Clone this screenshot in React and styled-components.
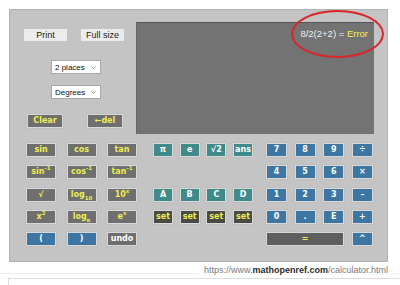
import React from 'react';
import styled, { createGlobalStyle } from 'styled-components';

const GlobalStyle = createGlobalStyle`
  body {
    margin: 0;
    background: #ffffff;
    font-family: "Liberation Sans", Arial, sans-serif;
  }
`;

const Page = styled.div`
  width: 400px;
  height: 285px;
  overflow: hidden;
`;

const Panel = styled.div`
  position: relative;
  box-sizing: border-box;
  margin: 9px 0 0 9px;
  width: 379px;
  height: 253px;
  background: #c4c4c4;
  border: 1px solid #b2b2b2;
  padding-top: 12px;
`;

const Top = styled.div`
  display: flex;
`;

const Controls = styled.div`
  width: 126px;
  display: flex;
  flex-direction: column;
  align-items: flex-start;
`;

const ToolRow = styled.div`
  display: flex;
  gap: ${p => p.$gap}px;
  margin-top: ${p => p.$top}px;
  padding-left: ${p => p.$left}px;
`;

const ToolButton = styled.div`
  width: 43px;
  height: 12px;
  background: #ececec;
  color: #222;
  font-size: 9px;
  line-height: 12px;
  text-align: center;
`;

const Select = styled.div`
  box-sizing: border-box;
  width: 50px;
  height: 14px;
  margin: ${p => p.$top}px 0 0 41px;
  background: #fff;
  border: 1px solid #a9a9a9;
  display: flex;
  align-items: center;
  justify-content: space-between;
  padding: 0 3px 0 3px;
  font-size: 8px;
  color: #111;

  svg {
    width: 7px;
    height: 7px;
  }
`;

const Display = styled.div`
  box-sizing: border-box;
  width: 238px;
  height: 112px;
  background: #737373;
  border-top: 1px solid #565656;
  border-left: 1px solid #666;
  padding: 5px 6px 0 0;
  text-align: right;
  font-size: 9.5px;
  color: #f2f2f2;
`;

const ErrorText = styled.span`
  color: #f3f34a;
`;

const Ellipse = styled.div`
  position: absolute;
  left: 281px;
  top: 0px;
  width: 93px;
  height: 48px;
  box-sizing: border-box;
  border: 2px solid #d8262b;
  border-radius: 50%;
`;

const Keys = styled.div`
  display: flex;
  margin-top: 9px;
  padding-left: 16px;
`;

const Group = styled.div`
  display: grid;
  grid-template-columns: repeat(${p => p.$cols}, ${p => p.$w}px);
  grid-template-rows: repeat(5, 14px);
  column-gap: ${p => p.$gap}px;
  row-gap: 8.25px;
  margin-left: ${p => p.$offset}px;
`;

const palette = {
  fn: ['#6f6f6f', '#eded55'],
  blue: ['#3d76a3', '#ffffff'],
  teal: ['#3f8b8b', '#ffffff'],
  set: ['#4a4a45', '#eded55'],
  gray: ['#6e6e6e', '#ffffff'],
  eq: ['#5f5f5f', '#eded55'],
};

const Key = styled.div`
  box-sizing: border-box;
  height: 14px;
  ${p => (p.$w ? `width: ${p.$w}px;` : '')}
  grid-column: ${p => (p.$span ? `span ${p.$span}` : 'auto')};
  background: ${p => palette[p.$kind][0]};
  color: ${p => palette[p.$kind][1]};
  border: 1px solid #d9d9d9;
  box-shadow: 0 0 0 0.5px #b8b8b8;
  font-family: "DejaVu Sans", Verdana, sans-serif;
  font-weight: bold;
  font-size: 8px;
  line-height: 12px;
  text-align: center;
  white-space: nowrap;

  sup, sub {
    font-size: 5.5px;
    line-height: 0;
  }
`;

const Blank = styled.div``;

const Footer = styled.div`
  display: flex;
  align-items: center;
  height: 16px;
  font-size: 9px;
  color: #7a7a7a;
`;

const Rule = styled.div`
  height: 0;
  border-top: 1px solid #ececec;
  width: ${p => (p.$w ? `${p.$w}px` : 'auto')};
  flex: ${p => (p.$w ? 'none' : '1')};
  margin-top: 6px;
`;

const Url = styled.div`
  padding: 0 2px 0 6px;
  b {
    color: #2a2a2a;
  }
`;

const Box = styled.div`
  margin-left: 8px;
  height: 20px;
  border-top: 1px solid #dedede;
  border-left: 1px solid #dedede;
`;

const Chevron = () => (
  <svg viewBox="0 0 10 10">
    <path d="M2 3.5 L5 6.5 L8 3.5" fill="none" stroke="#888" strokeWidth="1.2" />
  </svg>
);

const fnKeys = [
  ['fn', 'sin'], ['fn', 'cos'], ['fn', 'tan'],
  ['fn', <>sin<sup>-1</sup></>], ['fn', <>cos<sup>-1</sup></>], ['fn', <>tan<sup>-1</sup></>],
  ['fn', '√'], ['fn', <>log<sub>10</sub></>], ['fn', <>10<sup>x</sup></>],
  ['fn', <>x<sup>2</sup></>], ['fn', <>log<sub>e</sub></>], ['fn', <>e<sup>x</sup></>],
  ['blue', '('], ['blue', ')'], ['gray', 'undo'],
];

const memKeys = [
  ['teal', 'π'], ['teal', 'e'], ['teal', '√2'], ['teal', 'ans'],
  null, null, null, null,
  ['teal', 'A'], ['teal', 'B'], ['teal', 'C'], ['teal', 'D'],
  ['set', 'set'], ['set', 'set'], ['set', 'set'], ['set', 'set'],
];

const numKeys = [
  ['blue', '7'], ['blue', '8'], ['blue', '9'], ['blue', '÷'],
  ['blue', '4'], ['blue', '5'], ['blue', '6'], ['blue', '×'],
  ['blue', '1'], ['blue', '2'], ['blue', '3'], ['blue', '–'],
  ['blue', '0'], ['blue', '.'], ['blue', 'E'], ['blue', '+'],
  ['eq', '=', 3], ['blue', '^'],
];

const renderKeys = list =>
  list.map((k, i) =>
    k ? (
      <Key key={i} $kind={k[0]} $span={k[2]}>
        {k[1]}
      </Key>
    ) : (
      <Blank key={i} />
    )
  );

export default function App() {
  return (
    <Page>
      <GlobalStyle />
      <Panel>
        <Top>
          <Controls>
            <ToolRow $top={7} $left={14} $gap={14}>
              <ToolButton>Print</ToolButton>
              <ToolButton>Full size</ToolButton>
            </ToolRow>
            <Select $top={19}>
              2 places <Chevron />
            </Select>
            <Select $top={11}>
              Degrees <Chevron />
            </Select>
            <ToolRow $top={15} $left={17} $gap={24}>
              <Key $kind="fn" $w={36}>Clear</Key>
              <Key $kind="fn" $w={36}>←del</Key>
            </ToolRow>
          </Controls>
          <Display>
            8/2(2+2) = <ErrorText>Error</ErrorText>
          </Display>
        </Top>
        <Keys>
          <Group $cols={3} $w={30} $gap={10.5} $offset={0}>
            {renderKeys(fnKeys)}
          </Group>
          <Group $cols={4} $w={20} $gap={6.67} $offset={16}>
            {renderKeys(memKeys)}
          </Group>
          <Group $cols={4} $w={21} $gap={7.67} $offset={13}>
            {renderKeys(numKeys)}
          </Group>
        </Keys>
        <Ellipse />
      </Panel>
      <Footer>
        <Rule />
        <Url>
          https://www.<b>mathopenref.com</b>/calculator.html
        </Url>
        <Rule $w={10} />
      </Footer>
      <Box />
    </Page>
  );
}
